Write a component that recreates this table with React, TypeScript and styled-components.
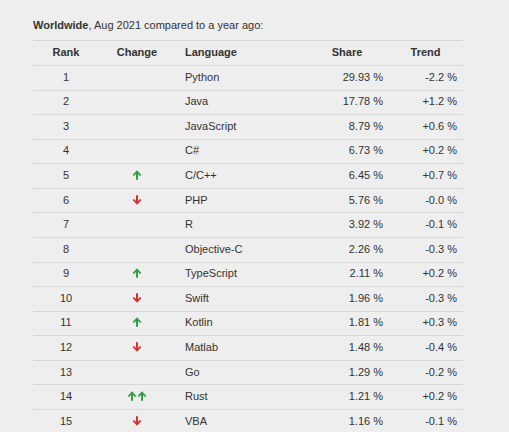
import React from "react";
import styled, { createGlobalStyle } from "styled-components";

const Global = createGlobalStyle`
  html, body { margin: 0; padding: 0; background: #eeeeee; }
  body { font-family: "Liberation Sans", Arial, sans-serif; font-size: 11px; color: #333333; }
`;

const Page = styled.div`
  padding: 19px 46px 0 33px;
`;

const Caption = styled.div`
  font-size: 11px;
  line-height: 13px;
  height: 13px;
  margin-bottom: 8px;
  color: #333;
  b { font-weight: bold; }
`;

const Table = styled.div`
  width: 430px;
  border-top: 1px solid #d8d8d8;
`;

const Row = styled.div<{ $head?: boolean }>`
  display: grid;
  grid-template-columns: 66px 76px 131px 82px 75px;
  height: ${(p) => (p.$head ? "24px" : "23.57px")};
  align-items: center;
  border-bottom: 1px solid #d8d8d8;
  font-weight: ${(p) => (p.$head ? "bold" : "normal")};
  color: #333;
  & > div {
    margin-top: ${(p) => (p.$head ? "-3px" : "-2px")};
  }
`;

const Cell = styled.div<{ $align: "left" | "center" | "right" }>`
  padding: ${(p) => (p.$align === "left" ? "0 0 0 10px" : p.$align === "right" ? "0 6px 0 0" : "0")};
  display: flex;
  justify-content: ${(p) => (p.$align === "left" ? "flex-start" : p.$align === "right" ? "flex-end" : "center")};
  align-items: center;
  gap: 0px;
  white-space: nowrap;
`;

const ShareCell = styled(Cell)`
  padding-right: 5px;
`;

const Arrow = ({ up }: { up: boolean }) => (
  <svg width="10" height="10" viewBox="0 0 10 10" style={{ display: "block" }}>
    {up ? (
      <path d="M5 0.3 L9.4 5 L8 6 L6 3.9 L6 9.7 L4 9.7 L4 3.9 L2 6 L0.6 5 Z" fill="#2ea043" />
    ) : (
      <path d="M5 9.7 L9.4 5 L8 4 L6 6.1 L6 0.3 L4 0.3 L4 6.1 L2 4 L0.6 5 Z" fill="#d9302c" />
    )}
  </svg>
);

type Item = { rank: number; change: string; lang: string; share: string; trend: string };

const data: Item[] = [
  { rank: 1, change: "", lang: "Python", share: "29.93 %", trend: "-2.2 %" },
  { rank: 2, change: "", lang: "Java", share: "17.78 %", trend: "+1.2 %" },
  { rank: 3, change: "", lang: "JavaScript", share: "8.79 %", trend: "+0.6 %" },
  { rank: 4, change: "", lang: "C#", share: "6.73 %", trend: "+0.2 %" },
  { rank: 5, change: "u", lang: "C/C++", share: "6.45 %", trend: "+0.7 %" },
  { rank: 6, change: "d", lang: "PHP", share: "5.76 %", trend: "-0.0 %" },
  { rank: 7, change: "", lang: "R", share: "3.92 %", trend: "-0.1 %" },
  { rank: 8, change: "", lang: "Objective-C", share: "2.26 %", trend: "-0.3 %" },
  { rank: 9, change: "u", lang: "TypeScript", share: "2.11 %", trend: "+0.2 %" },
  { rank: 10, change: "d", lang: "Swift", share: "1.96 %", trend: "-0.3 %" },
  { rank: 11, change: "u", lang: "Kotlin", share: "1.81 %", trend: "+0.3 %" },
  { rank: 12, change: "d", lang: "Matlab", share: "1.48 %", trend: "-0.4 %" },
  { rank: 13, change: "", lang: "Go", share: "1.29 %", trend: "-0.2 %" },
  { rank: 14, change: "uu", lang: "Rust", share: "1.21 %", trend: "+0.2 %" },
  { rank: 15, change: "d", lang: "VBA", share: "1.16 %", trend: "-0.1 %" },
];

export default function App() {
  return (
    <>
      <Global />
      <Page>
        <Caption>
          <b>Worldwide</b>, Aug 2021 compared to a year ago:
        </Caption>
        <Table>
          <Row $head>
            <Cell $align="center">Rank</Cell>
            <Cell $align="center">Change</Cell>
            <Cell $align="left">Language</Cell>
            <Cell $align="center">Share</Cell>
            <Cell $align="center">Trend</Cell>
          </Row>
          {data.map((d) => (
            <Row key={d.rank}>
              <Cell $align="center">{d.rank}</Cell>
              <Cell $align="center">
                {d.change.split("").map((c, i) => (
                  <Arrow key={i} up={c === "u"} />
                ))}
              </Cell>
              <Cell $align="left">{d.lang}</Cell>
              <ShareCell $align="right">{d.share}</ShareCell>
              <Cell $align="right">{d.trend}</Cell>
            </Row>
          ))}
        </Table>
      </Page>
    </>
  );
}
